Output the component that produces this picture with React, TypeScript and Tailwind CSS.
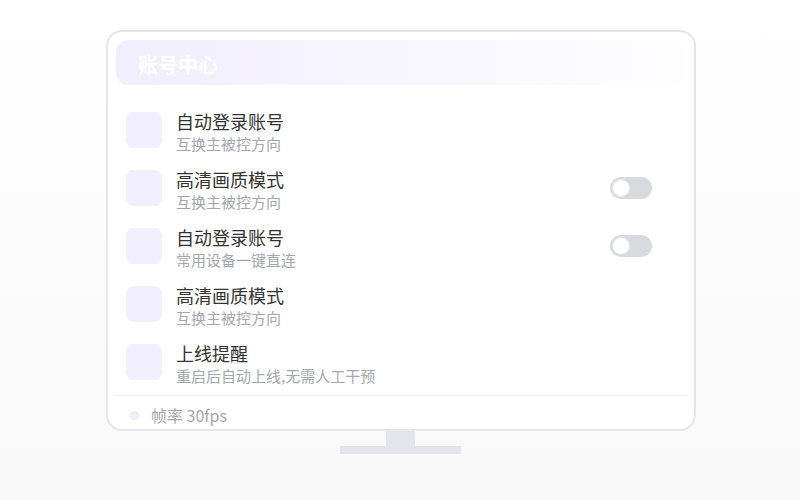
import React from "react";

const rows = [
  { t: "自动登录账号", s: "互换主被控方向", toggle: false },
  { t: "高清画质模式", s: "互换主被控方向", toggle: true },
  { t: "自动登录账号", s: "常用设备一键直连", toggle: true },
  { t: "高清画质模式", s: "互换主被控方向", toggle: false },
  { t: "上线提醒", s: "重启后自动上线,无需人工干预", toggle: false },
];

function Toggle() {
  return (
    <div className="w-[42px] h-[22px] rounded-full bg-[#d8dae0] flex items-center p-[2px]">
      <div className="w-[18px] h-[18px] rounded-full bg-white border border-[#e3e5ea]" />
    </div>
  );
}

export default function App() {
  return (
    <div
      className="min-h-[500px] w-full bg-gradient-to-b from-white to-[#f9f9fa] flex flex-col items-center pt-[30px]"
      style={{ fontFamily: '"Noto Sans CJK SC", "Noto Sans", sans-serif' }}
    >
      <div className="ml-[2px] w-[590px] h-[401px] rounded-[16px] border-2 border-[#e4e6eb] bg-white p-2 flex flex-col">
        <div className="shrink-0 h-[45px] rounded-[12px] bg-gradient-to-r from-[#f1eefd] to-[#fefeff] flex items-center pl-[22px] pt-[4px] text-white text-[20px] font-semibold">
          账号中心
        </div>
        <div className="shrink-0 mt-[16px] pl-[10px] pr-[34px] flex flex-col">
          {rows.map((r, i) => (
            <div key={i} className="h-[58px] flex items-center">
              <div className="w-[36px] h-[36px] rounded-[8px] bg-[#f1eefd] shrink-0" />
              <div className="ml-[14px] flex flex-col pt-[4px] flex-1">
                <div className="text-[18px] leading-[22px] text-[#333333]">{r.t}</div>
                <div className="text-[15px] leading-[20px] mt-[2px] text-[#a3a7ae]">{r.s}</div>
              </div>
              {r.toggle && <Toggle />}
            </div>
          ))}
        </div>
        <div className="shrink-0 mt-[4px] h-px bg-[#eef0f3]" />
        <div className="shrink-0 h-[24px] flex items-center pl-[14px] pt-[14px]">
          <div className="w-[9px] h-[9px] rounded-full bg-[#efecfc]" />
          <div className="ml-[12px] text-[16px] leading-[20px] text-[#a3a7ae]">帧率 30fps</div>
        </div>
      </div>
      <div className="w-[29px] h-[15px] bg-[#e2e5ea]" />
      <div className="w-[121px] h-[8px] bg-[#e2e5ea]" />
    </div>
  );
}
